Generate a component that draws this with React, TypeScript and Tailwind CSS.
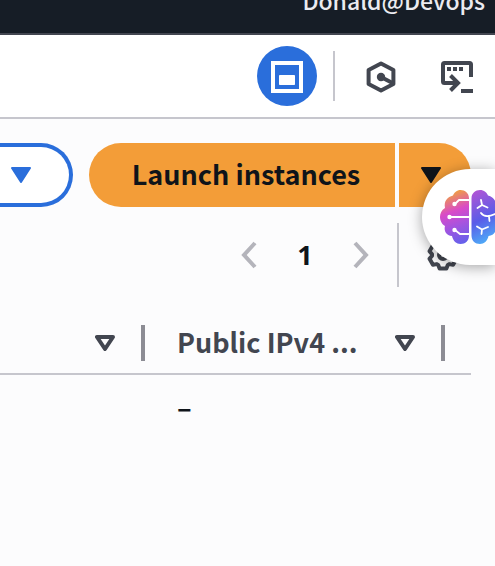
import type { ReactNode } from "react";

const inkFont = "font-['Noto_Sans_CJK_SC','Noto_Sans',sans-serif]";

function SplitViewIcon() {
  return (
    <svg viewBox="0 0 16 16" className="size-8" fill="none" stroke="currentColor" strokeWidth="2" aria-hidden="true">
      <path d="M1 1h14v14H1z" />
      <rect x="4" y="7" width="8" height="5" rx="0.4" fill="currentColor" stroke="none" />
    </svg>
  );
}

function HexagonIcon() {
  return (
    <svg viewBox="0 0 32 32" className="size-8" fill="none" stroke="currentColor" strokeWidth="4" strokeLinejoin="round" aria-hidden="true">
      <path d="M16 2.4 28.4 9v14L16 29.6 3.600 23V9z" />
      <circle cx="16" cy="16" r="4.200" fill="currentColor" stroke="none" />
      <path d="m16 16 12.400 6.600" />
    </svg>
  );
}

function CloudShellIcon() {
  return (
    <svg viewBox="0 0 32 32" className="size-8" fill="none" stroke="currentColor" strokeWidth="4" aria-hidden="true">
      <path d="M30 16V3.500Q30 2 28.500 2h-25Q2 2 2 3.500v17Q2 22 3.500 22H18" strokeLinejoin="round" />
      <path d="m9.500 14.500 7.500 7.500-7.500 7.500" />
      <path d="M20 30h12" />
      <path d="M6 6h4v4H6zM12 6h4v4h-4zM18 6h4v4h-4z" fill="currentColor" stroke="none" />
    </svg>
  );
}

function CaretFilled() {
  return (
    <svg viewBox="0 0 20 16" className="h-4 w-5" fill="currentColor" stroke="currentColor" strokeWidth="2" strokeLinejoin="round" aria-hidden="true">
      <path d="M1 1h18l-9 14z" />
    </svg>
  );
}

function CaretOutline() {
  return (
    <svg viewBox="0 0 20 16" className="h-4 w-5" fill="none" stroke="currentColor" strokeWidth="4" strokeLinejoin="round" aria-hidden="true">
      <path d="M2 2h16l-8 12z" />
    </svg>
  );
}

function Chevron({ path }: { path: string }) {
  return (
    <svg viewBox="0 0 16 28" className="h-7 w-4" fill="none" stroke="currentColor" strokeWidth="4" aria-hidden="true">
      <path d={path} />
    </svg>
  );
}

const gearPoints = [0, 60, 120, 180, 240, 300]
  .flatMap((tooth) => [
    [tooth - 26, 11],
    [tooth - 14, 14],
    [tooth + 14, 14],
    [tooth + 26, 11],
  ])
  .map(([degrees, radius]) => {
    const angle = (degrees * Math.PI) / 180;
    return `${(16 + radius * Math.sin(angle)).toFixed(2)},${(16 - radius * Math.cos(angle)).toFixed(2)}`;
  })
  .join(" ");

function GearIcon() {
  return (
    <svg viewBox="0 0 32 32" className="size-8" fill="none" stroke="currentColor" strokeWidth="4" strokeLinejoin="round" aria-hidden="true">
      <polygon points={gearPoints} />
      <circle cx="16" cy="16" r="4" />
    </svg>
  );
}

function BrainIcon() {
  return (
    <svg viewBox="0 0 62 56" className="h-14 w-[62px] shrink-0" fill="none" aria-hidden="true">
      <defs>
        <linearGradient id="brain-left" x1="9" y1="4" x2="28" y2="54" gradientUnits="userSpaceOnUse">
          <stop offset="0" stopColor="#f0a040" />
          <stop offset="0.35" stopColor="#d94bc8" />
          <stop offset="0.6" stopColor="#a953de" />
          <stop offset="1" stopColor="#5f62ec" />
        </linearGradient>
        <linearGradient id="brain-right" x1="34" y1="4" x2="58" y2="52" gradientUnits="userSpaceOnUse">
          <stop offset="0" stopColor="#ac55d6" />
          <stop offset="0.5" stopColor="#5a5ce8" />
          <stop offset="1" stopColor="#4cb8fa" />
        </linearGradient>
      </defs>
      <path
        d="M29 9.500C29 4 25 1 20.500 1 17 1 14 3.500 13 6.500 7.500 8 3.500 12 5 19 1.500 21 0 24.500 0 28s2 7.500 5 9C3.500 42 6.500 46.500 12 47c1 5 4.500 8 8.500 8 5 0 8.500-3.500 8.500-8.500z"
        fill="url(#brain-left)"
      />
      <path
        d="M31.500 9.500C31.500 4 35.500 1 40 1c4 0 7 2.500 8 5.500C53.500 8 57 12 55.500 19c3.500 2 5 5.500 5 9s-2 7.500-5 9c1.500 5-1.500 9.500-7 10-1 5-4.500 8-8.500 8-5 0-8.500-3.500-8.500-8.500z"
        fill="url(#brain-right)"
      />
      <g stroke="#fff" strokeWidth="1.800" strokeLinecap="round" strokeLinejoin="round">
        <path d="M15 15l4-4h10M10 28h19M15 41l5 4h9" />
        <path d="M41 11l1 5-4.500 3M42 16l5.500 2.500M41 24c2 3 6 4.500 14 1M49 27.500l.5 4.500M37 37.500l5 3 6-2.500M42 40.500L41.500 45" />
      </g>
      <g fill="#fff">
        <circle cx="14.500" cy="15" r="2.200" />
        <circle cx="9.500" cy="28" r="2.200" />
        <circle cx="14.500" cy="41" r="2.200" />
      </g>
    </svg>
  );
}

function ToolButton({ label, children }: { label: string; children: ReactNode }) {
  return (
    <button type="button" aria-label={label} className="flex size-8 items-center justify-center text-[#424650]">
      {children}
    </button>
  );
}

export default function App() {
  return (
    <div className={`relative min-h-screen overflow-hidden bg-[#fcfcfd] text-[#0f141a] ${inkFont}`}>
      <header className="flex h-[35px] items-end justify-end overflow-hidden border-b-2 border-[#424650] bg-[#161d26] pr-2.5 pb-[17px]">
        <span className="text-[23px] leading-8 font-medium text-[#ebebf0]">Donald@Devops</span>
      </header>

      <nav aria-label="Tools" className="flex h-21 items-center justify-end border-b-2 border-[#c6c6cd] bg-white pr-[22px]">
        <button type="button" aria-label="Split panel" className="flex size-15 items-center justify-center rounded-full bg-[#2a6edb] pt-0.5 text-white">
          <SplitViewIcon />
        </button>
        <span className="mr-[30px] ml-4 h-[50px] w-0.5 bg-[#c6c6cd]" />
        <div className="flex gap-11 pt-0.5">
          <ToolButton label="Amazon Q">
            <HexagonIcon />
          </ToolButton>
          <ToolButton label="CloudShell">
            <CloudShellIcon />
          </ToolButton>
        </div>
      </nav>

      <main className="pt-6 pr-6">
        <div className="flex justify-end gap-4">
          <button type="button" aria-label="Actions" className="flex h-16 flex-1 items-center justify-end rounded-r-full border-4 border-l-0 border-[#2a6edb] bg-white pr-[38px] text-[#2a6edb]">
            <CaretFilled />
          </button>
          <div className="flex gap-1">
            <button type="button" className="h-16 w-[306px] rounded-l-full bg-[#f39d38] pb-0.5 pl-2 text-[27px] leading-8 font-bold whitespace-nowrap">
              Launch instances
            </button>
            <button type="button" aria-label="More launch options" className="flex h-16 w-18 items-center rounded-r-full bg-[#f39d38] pl-[22px]">
              <CaretFilled />
            </button>
          </div>
        </div>

        <div className="mt-4 flex h-16 items-center justify-end pr-3">
          <button type="button" aria-label="Previous page" className="text-[#b4b4bb]">
            <Chevron path="M14 2 3 14l11 12" />
          </button>
          <span className="w-24 text-center font-['Open_Sans',sans-serif] text-[27px] leading-8 font-bold">1</span>
          <button type="button" aria-label="Next page" className="text-[#b4b4bb]">
            <Chevron path="m2 2 11 12L2 26" />
          </button>
          <span className="mr-7 ml-7 h-16 w-0.5 bg-[#c6c6cd]" />
          <button type="button" aria-label="Preferences" className="text-[#424650]">
            <GearIcon />
          </button>
        </div>

        <table className="mt-6 w-full table-fixed border-separate border-spacing-0 text-left">
          <thead className="text-[#424650]">
            <tr className="h-16">
              <th className="border-b-2 border-[#c6c6cd] p-0 pt-0.5">
                <div className="flex items-center justify-end gap-[26px]">
                  <button type="button" aria-label="Sort column">
                    <CaretOutline />
                  </button>
                  <span className="h-9 w-1 bg-[#8c8c94]" />
                </div>
              </th>
              <th className="w-[300px] border-b-2 border-[#c6c6cd] p-0 pt-0.5">
                <div className="flex items-center pl-8">
                  <span className="flex-1 pb-0.5 text-[27px] leading-8 font-bold whitespace-nowrap">Public IPv4 ...</span>
                  <button type="button" aria-label="Sort by public IPv4" className="mr-[26px]">
                    <CaretOutline />
                  </button>
                  <span className="h-9 w-1 bg-[#8c8c94]" />
                </div>
              </th>
              <th className="w-[26px] border-b-2 border-[#c6c6cd] p-0" />
            </tr>
          </thead>
          <tbody>
            <tr className="h-16">
              <td className="p-0" />
              <td className="p-0 pl-8 text-[27px] leading-8 font-bold">–</td>
              <td className="p-0" />
            </tr>
          </tbody>
        </table>
      </main>

      <button
        type="button"
        aria-label="Open assistant"
        className="absolute top-[169px] right-0 flex h-24 w-[73px] items-center overflow-visible rounded-l-full bg-white pl-[18px] shadow-[0_2px_14px_rgba(0,0,0,0.35)]"
      >
        <BrainIcon />
      </button>
    </div>
  );
}
